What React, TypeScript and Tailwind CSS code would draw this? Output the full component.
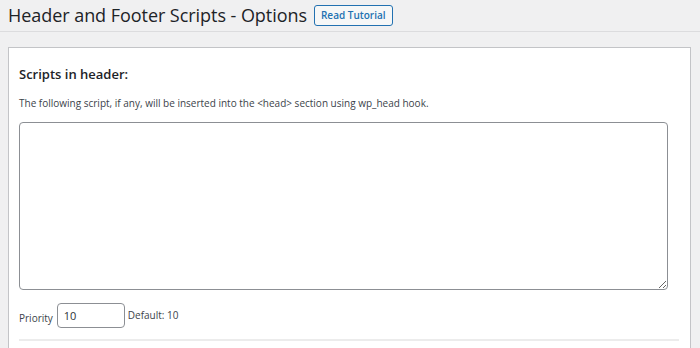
const font = { fontFamily: '"Open Sans", "Noto Sans", sans-serif' };

export default function App() {
  return (
    <div
      className="h-[348px] w-[700px] overflow-hidden bg-[#f0f0f1] text-[#1d2327]"
      style={font}
    >
      <div className="flex h-[32px] items-center gap-[7px] border-b border-[#dcdcde] pl-[8px] pb-[1px]">
        <h1 className="text-[18px] leading-none tracking-[-0.05px]">
          Header and Footer Scripts - Options
        </h1>
        <button className="h-[21px] rounded-[3px] border border-[#2271b1] bg-[#f6f7f7] px-[6px] text-[10px] font-semibold leading-none text-[#2271b1]">
          Read Tutorial
        </button>
      </div>

      <div className="ml-[8px] mr-[9px] mt-[15px] border border-[#c3c4c7] bg-white px-[10px] pt-[17px]">
        <h2 className="text-[13px] font-semibold leading-[18px]">
          Scripts in header:
        </h2>
        <p className="mt-[13px] text-[10px] leading-[14px] text-[#3c434a]">
          The following script, if any, will be inserted into the &lt;head&gt;
          section using wp_head hook.
        </p>
        <textarea className="mt-[12px] block h-[168px] w-[649px] rounded-[4px] border border-[#8c8f94] bg-white" />
        <div className="mt-[13px] flex items-center text-[10px] text-[#3c434a]">
          <span className="pt-[6px]">Priority</span>
          <input
            defaultValue="10"
            className="ml-[4px] h-[25px] w-[68px] rounded-[4px] border border-[#8c8f94] px-[6px] text-[11px] text-[#2c3338] outline-none"
          />
          <span className="ml-[3px] pb-[1px]">Default: 10</span>
        </div>
        <div className="mr-[1px] mt-[11px] h-[2px] bg-[#ececec]" />
        <div className="h-[20px]" />
      </div>
    </div>
  );
}
